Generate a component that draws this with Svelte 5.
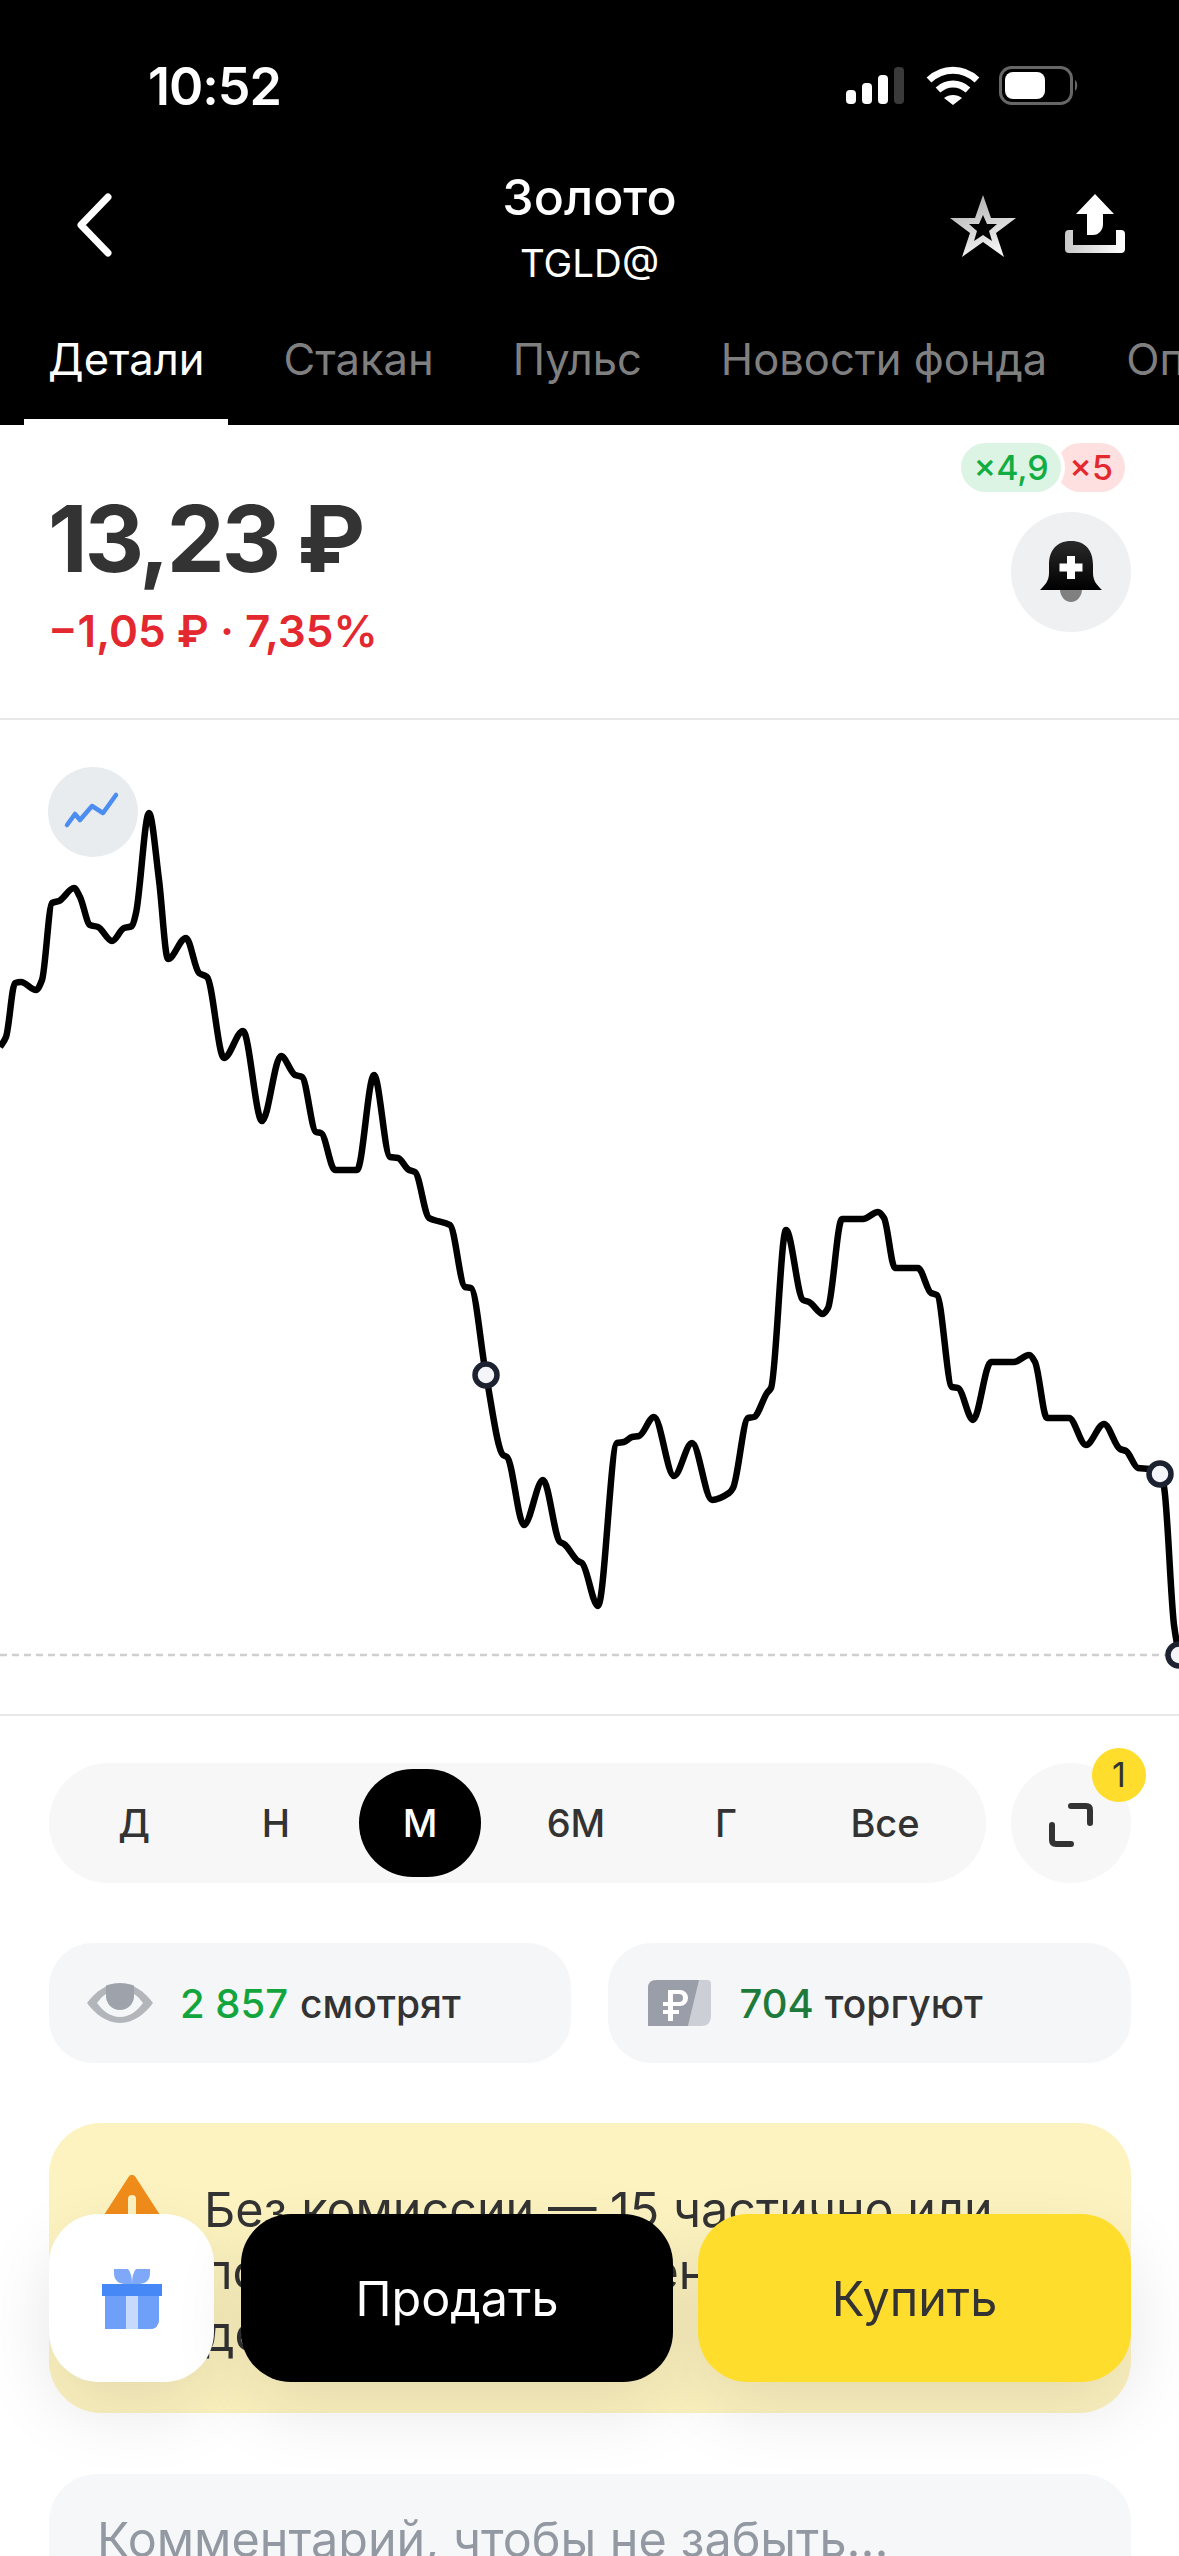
<script>
  const pts = [[0,1047],[6,1037],[15,983],[21,982],[36,990],[42,980],[52,903],[59,901],[74,888],[80,897],[90,925],[98,927],[112,941],[124,928],[132,926],[136,913],[149,813],[159,880],[168,959],[186,938],[199,973],[207,977],[224,1058],[243,1031],[262,1121],[281,1056],[295,1075],[302,1077],[316,1132],[321,1133],[335,1170],[357,1170],[374,1075],[390,1157],[398,1158],[409,1170],[415,1172],[429,1218],[434,1220],[450,1225],[465,1287],[471,1288],[486,1375],[503,1455],[507,1457],[524,1525],[543,1480],[560,1542],[564,1544],[578,1561],[582,1563],[598,1606],[617,1443],[624,1442],[632,1437],[639,1436],[654,1417],[674,1476],[692,1443],[712,1500],[729,1493],[733,1488],[748,1418],[754,1417],[767,1393],[771,1388],[786,1230],[803,1300],[809,1302],[823,1314],[828,1308],[842,1219],[863,1219],[878,1212],[884,1218],[895,1268],[918,1268],[931,1293],[937,1295],[952,1387],[958,1388],[973,1420],[991,1362],[1014,1362],[1029,1355],[1035,1362],[1047,1418],[1069,1418],[1086,1445],[1104,1424],[1120,1449],[1126,1451],[1138,1468],[1149,1469],[1160,1474],[1164,1487],[1174,1625],[1179,1655]];

  function monotone(p) {
    const n = p.length;
    const s = [];
    for (let i = 0; i < n - 1; i++) s.push((p[i + 1][1] - p[i][1]) / (p[i + 1][0] - p[i][0]));
    const t = [s[0]];
    for (let i = 1; i < n - 1; i++) {
      if (s[i - 1] * s[i] <= 0) t.push(0);
      else {
        const h0 = p[i][0] - p[i - 1][0], h1 = p[i + 1][0] - p[i][0];
        t.push((3 * (h0 + h1)) / ((2 * h1 + h0) / s[i - 1] + (h1 + 2 * h0) / s[i]));
      }
    }
    t.push(s[n - 2]);
    let d = `M${p[0][0]} ${p[0][1]}`;
    for (let i = 0; i < n - 1; i++) {
      const h = (p[i + 1][0] - p[i][0]) / 3;
      d += `C${(p[i][0] + h).toFixed(1)} ${(p[i][1] + t[i] * h).toFixed(1)} ${(p[i + 1][0] - h).toFixed(1)} ${(p[i + 1][1] - t[i + 1] * h).toFixed(1)} ${p[i + 1][0]} ${p[i + 1][1]}`;
    }
    return d;
  }
  const line = monotone(pts);
  const markers = [[486, 1375], [1160, 1474], [1179, 1655]];
  const tabs = ['Детали', 'Стакан', 'Пульс', 'Новости фонда', 'Операции'];
  const periods = ['Д', 'Н', 'М', '6М', 'Г', 'Все'];
</script>

<div class="page">
  <header class="head">
    <div class="status">
      <span class="time">10:52</span>
      <svg class="sys" width="240" height="44" viewBox="0 0 240 44">
        <g fill="#fff">
          <rect x="0" y="25" width="10" height="14" rx="4"/>
          <rect x="16" y="18" width="10" height="21" rx="4"/>
          <rect x="32" y="10" width="10" height="29" rx="4"/>
        </g>
        <rect x="48" y="2" width="10" height="37" rx="4" fill="#3a3a3a"/>
        <g fill="none" stroke="#fff" stroke-width="7">
          <path d="M83 15C97 2 117 2 131 15"/>
          <path d="M92 25C101 17 113 17 122 25"/>
        </g>
        <path d="M98 33C103 29 111 29 116 33L107 40Z" fill="#fff"/>
        <rect x="154.500" y="2.500" width="71" height="36" rx="11" fill="none" stroke="#666" stroke-width="3"/>
        <rect x="159" y="7" width="40" height="27" rx="8" fill="#fff"/>
        <path d="M229 15C232 17 232 24 229 26Z" fill="#666"/>
      </svg>
    </div>
    <div class="nav">
      <svg class="back" width="36" height="64" viewBox="0 0 36 64"><path d="M32 4 5 32l27 28" fill="none" stroke="#fff" stroke-width="7" stroke-linecap="round" stroke-linejoin="round"/></svg>
      <div class="title">
        <div class="name">Золото</div>
        <div class="ticker">TGLD@</div>
      </div>
      <div class="actions">
        <svg width="68" height="64" viewBox="0 0 68 64">
          <defs>
            <linearGradient id="sg" x1="0" y1="0" x2="0.4" y2="1"><stop offset="0" stop-color="#a8a8a8"/><stop offset="1" stop-color="#f2f2f2"/></linearGradient>
            <linearGradient id="ug" x1="0" y1="0" x2="1" y2="0"><stop offset="0" stop-color="#c8c8c8"/><stop offset="1" stop-color="#fff"/></linearGradient>
          </defs>
          <path d="M34 1 42 24H67L47 39 55 63 34 48 13 63 21 39 1 24H26Z" fill="url(#sg)"/>
          <path d="M34 21 38 30H48L40 37 43 47 34 41 25 47 28 37 20 30H30Z" fill="#000"/>
        </svg>
        <svg width="60" height="62" viewBox="0 0 60 62">
          <path d="M30 0 49 20H38V30C38 36 34 41 28 41H22V20H11Z" fill="#fff"/>
          <path d="M4 36H8V51H51V36H56Q60 36 60 40V55Q60 59 56 59H4Q0 59 0 55V40Q0 36 4 36Z" fill="url(#ug)"/>
        </svg>
      </div>
    </div>
    <nav class="tabs">
      {#each tabs as t, i}
        <div class="tab" class:on={i === 0}>{t}</div>
      {/each}
    </nav>
  </header>

  <section class="quote">
    <div class="prices">
      <div class="price">13,23 ₽</div>
      <div class="delta">−1,05 ₽ · 7,35%</div>
    </div>
    <div class="side">
      <div class="badges">
        <span class="bg">×4,9</span><span class="br">×5</span>
      </div>
      <div class="bell">
        <svg width="62" height="62" viewBox="0 0 62 62">
          <defs><linearGradient id="bg1" x1="0" y1="0" x2="0" y2="1"><stop offset="0" stop-color="#2a2a2a"/><stop offset="1" stop-color="#000"/></linearGradient></defs>
          <path d="M20 48a11 13 0 0 0 22 0Z" fill="#808080"/>
          <path d="M31 0C16 0 9 10 9 24V32C9 40 5 44 0 49H62C57 44 53 40 53 32V24C53 10 46 0 31 0Z" fill="url(#bg1)"/>
          <path d="M27 15h8v7.500h7.500v8H35V38H27V30.500H19.500v-8H27Z" fill="#fff"/>
        </svg>
      </div>
    </div>
  </section>

  <section class="chart">
    <svg class="plot" width="1179" height="994" viewBox="0 720 1179 994">
      <line x1="0" y1="1655" x2="1179" y2="1655" stroke="#cfcfcf" stroke-width="2.500" stroke-dasharray="7 5"/>
      <path d={line} fill="none" stroke="#000" stroke-width="6.500" stroke-linejoin="round"/>
      {#each markers as m}
        <circle cx={m[0]} cy={m[1]} r="11" fill="#f3f5f9" stroke="#1c2230" stroke-width="5.500"/>
      {/each}
    </svg>
    <div class="mode">
      <svg width="90" height="90" viewBox="0 0 90 90"><path d="M19 58 27 47 32 53 44 39 55 46 68 28" fill="none" stroke="#4b8df0" stroke-width="4.500" stroke-linecap="round" stroke-linejoin="round"/></svg>
    </div>
  </section>

  <section class="controls">
    <div class="periods">
      {#each periods as p, i}
        <div class="per" class:sel={i === 2}>{p}</div>
      {/each}
    </div>
    <div class="expand">
      <svg width="44" height="44" viewBox="0 0 44 44"><path d="M22 3H37Q41 3 41 7V20M3 22V37Q3 41 7 41H22" fill="none" stroke="#333" stroke-width="6" stroke-linecap="round"/></svg>
      <span class="count">1</span>
    </div>
  </section>

  <section class="stats">
    <div class="stat">
      <svg width="66" height="40" viewBox="0 0 66 40">
        <path d="M33 0C46 0 58 9 66 20 58 31 46 40 33 40 20 40 8 31 0 20 8 9 20 0 33 0Z" fill="#b2b5ba"/>
        <path d="M33 6C43 6 51 13 56 20 51 27 43 34 33 34 23 34 15 27 10 20 15 13 23 6 33 6Z" fill="#f5f6f8"/>
        <path d="M19 2.500Q33 -2 47 2.500V13A14 14 0 0 1 19 13Z" fill="#9da2ab"/>
      </svg>
      <span class="num green">2 857</span><span class="lbl">смотрят</span>
    </div>
    <div class="stat second">
      <svg width="63" height="46" viewBox="0 0 63 46">
        <path d="M50 0H59Q63 0 63 4V36Q63 46 53 46H40Z" fill="#ccd0d6"/>
        <path d="M8 0H51L40 46H0V8Q0 0 8 0Z" fill="#9a9ea8"/>
        <path d="M21 10H32A8 8 0 0 1 32 26H25V30H31V34H25V41H20V34H15V30H20V26H15V22H20V10ZM25 14V22H31A4 4 0 0 0 31 14Z" fill="#fff"/>
      </svg>
      <span class="num dark">704</span><span class="lbl">торгуют</span>
    </div>
  </section>

  <section class="notice">
    <svg class="warn" width="92" height="72" viewBox="0 0 92 72">
      <path d="M46 4 86 66H6Z" fill="#f08c1a" stroke="#f08c1a" stroke-width="8" stroke-linejoin="round"/>
      <rect x="42" y="20" width="8" height="30" rx="4" fill="#fdf3c0"/>
    </svg>
    <p>Без комиссии — 15 частично или<br/>полностью исполненных заявок в<br/>день</p>
  </section>

  <section class="comment">Комментарий, чтобы не забыть...</section>

  <div class="bar">
    <button class="gift" aria-label="Подарок">
      <svg width="60" height="62" viewBox="0 0 60 62">
        <path d="M12 0H26Q30 4 30 15 12 17 12 4Z" fill="#7fa9f8"/>
        <path d="M48 0H34Q30 4 30 15 48 17 48 4Z" fill="#7fa9f8"/>
        <path d="M3 24H57V50Q57 60 47 60H3Z" fill="#6ea0fa"/>
        <rect x="24" y="24" width="12" height="36" fill="#c6dafb"/>
        <path d="M36 60Q44 58 44 50V28H57V50Q57 60 47 60Z" fill="#6ea0fa"/>
        <rect x="0" y="15" width="60" height="12" fill="#4788f7"/>
      </svg>
    </button>
    <button class="sell">Продать</button>
    <button class="buy">Купить</button>
  </div>
</div>

<style>
  :global(body) { margin: 0; background: #fff; }
  .page {
    position: relative;
    width: 1179px;
    height: 2556px;
    overflow: hidden;
    background: #fff;
    font-family: Inter, "Noto Sans", sans-serif;
    color: #333;
  }
  .head { background: #000; color: #fff; height: 425px; }
  .status {
    height: 126px;
    padding: 48px 0 0 148px;
    box-sizing: border-box;
    display: flex;
    align-items: flex-start;
  }
  .time { font-size: 52px; font-weight: 600; line-height: 78px; letter-spacing: -1px; }
  .sys { margin-top: 17px; position: absolute; left: 846px; }
  .nav {
    height: 174px;
    position: relative;
    display: flex;
    justify-content: space-between;
    padding: 0 54px 0 76px;
    box-sizing: border-box;
  }
  .back { margin-top: 67px; }
  .title { text-align: center; position: absolute; left: 0; right: 0; top: 43px; }
  .name { font-size: 50px; font-weight: 500; line-height: 56px; }
  .ticker { font-size: 38.5px; line-height: 46px; margin-top: 15px; }
  .actions { display: flex; gap: 48px; margin-top: 68px; align-items: flex-start; }
  .tabs {
    display: flex;
    gap: 31px;
    padding-left: 24px;
    height: 125px;
    white-space: nowrap;
  }
  .tab {
    padding: 28px 24px 0;
    font-size: 43.500px;
    line-height: 62px;
    color: #7f7f7f;
    box-sizing: border-box;
  }
  .tab.on { color: #fff; border-bottom: 6px solid #fff; }

  .quote {
    height: 295px;
    box-sizing: border-box;
    border-bottom: 2px solid #e6e7e9;
    display: flex;
    justify-content: space-between;
    padding: 0 48px;
  }
  .price { font-size: 92px; font-weight: 700; line-height: 110px; margin-top: 59px; color: #333; letter-spacing: -3px; }
  .delta { font-size: 44px; font-weight: 600; line-height: 52px; margin-top: 11px; color: #e3282f; }
  .side { display: flex; flex-direction: column; align-items: flex-end; }
  .badges { display: flex; margin-top: 18px; margin-right: 6px; font-size: 34px; font-weight: 500; line-height: 49px; }
  .bg { background: #dcf4e3; color: #12ad42; padding: 0 12.500px; border-radius: 25px; box-shadow: 0 0 0 4px #fff; position: relative; z-index: 1; }
  .br { background: #ffe0e0; color: #e3282f; padding: 0 12px 0 13px; border-radius: 25px; margin-left: -5px; }
  .bell {
    width: 120px; height: 120px; border-radius: 50%;
    background: #eff0f2;
    margin-top: 20px;
    display: flex; align-items: center; justify-content: center;
  }
  .chart { position: relative; height: 994px; border-bottom: 2px solid #e6e7e9; }
  .plot { display: block; }
  .mode {
    position: absolute; left: 48px; top: 47px;
    width: 90px; height: 90px; border-radius: 50%;
    background: #e9ecef;
  }
  .mode svg { display: block; }

  .controls { display: flex; gap: 25px; padding: 47px 48px 0 49px; }
  .periods {
    flex: 1;
    height: 120px;
    background: #f7f7f8;
    border-radius: 60px;
    display: grid;
    grid-template-columns: 170px 114px 174px 138px 162px 156px;
    align-items: center;
    justify-items: center;
    font-size: 38px;
    font-weight: 500;
  }
  .per.sel {
    width: 122px; height: 108px; border-radius: 54px;
    background: #000; color: #fff;
    display: flex; align-items: center; justify-content: center;
  }
  .expand {
    position: relative;
    width: 120px; height: 120px; border-radius: 50%;
    background: #f7f7f8;
    display: flex; align-items: center; justify-content: center;
  }
  .expand svg { margin-top: 4px; }
  .count {
    position: absolute; left: 81px; top: -15px;
    width: 54px; height: 54px; border-radius: 50%;
    background: #ffdd2d;
    font-size: 34px; line-height: 54px; text-align: center;
  }
  .stats { display: flex; gap: 37px; padding: 60px 48px 0 49px; }
  .stat {
    flex: 1;
    height: 120px;
    border-radius: 44px;
    background: #f5f6f8;
    display: flex;
    align-items: center;
    padding-left: 38px;
    box-sizing: border-box;
    font-size: 40px;
    font-weight: 500;
  }
  .stat.second { padding-left: 40px; }
  .num { margin-left: 27px; margin-right: 12px; }
  .green { color: #12a53d; }
  .dark { color: #1e7a3a; margin-left: 29px; margin-right: 11px; }
  .lbl { color: #333; font-size: 39px; }

  .notice {
    margin: 60px 48px 0 49px;
    height: 290px;
    border-radius: 52px;
    background: #fdf3c0;
    position: relative;
    padding: 56px 0 0 155px;
    box-sizing: border-box;
  }
  .notice p { margin: 0; font-size: 48.500px; line-height: 62px; color: #333; white-space: nowrap; }
  .warn { position: absolute; left: 37px; top: 52px; }
  .comment {
    margin: 61px 48px 0 49px;
    height: 140px;
    border-radius: 48px;
    background: #f6f7f8;
    padding: 36px 0 0 48px;
    box-sizing: border-box;
    font-size: 48.500px;
    line-height: 60px;
    color: #9299a2;
  }
  .bar {
    position: absolute;
    left: 49px; right: 48px; top: 2214px;
    display: flex;
    height: 168px;
  }
  .bar button {
    border: 0;
    height: 168px;
    border-radius: 50px;
    font-family: inherit;
    font-size: 48.500px;
    box-shadow: 0 28px 70px rgba(0, 0, 0, .1);
    padding: 0;
  }
  .gift { width: 165px; background: #fff; display: flex; align-items: center; justify-content: center; margin-right: 27px; }
  .gift svg { margin-top: 4px; }
  .sell { width: 432px; background: #000; color: #fff; margin-right: 25px; }
  .buy { flex: 1; background: #ffdd2d; color: #333; }
</style>
